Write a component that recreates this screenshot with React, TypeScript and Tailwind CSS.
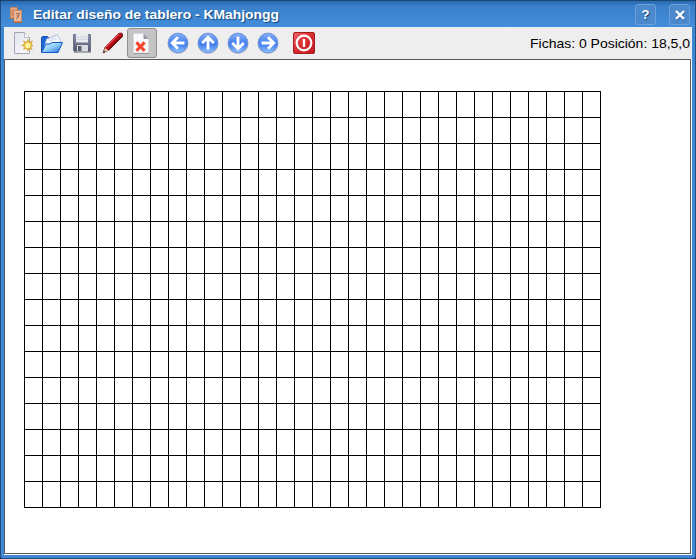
import React from "react";

const COLUMNS = 32;
const ROWS = 16;

function TilesIcon() {
  return (
    <svg width="18" height="20" viewBox="0 0 18 20" className="mt-px">
      <rect x="3" y="2" width="8" height="12" rx="1" fill="#b9693f" />
      <rect x="3.5" y="2.5" width="6.5" height="10.5" rx=".5" fill="#e0a582" />
      <path d="M5 5v6" stroke="#c98058" />
      <rect x="6.5" y="5" width="8.5" height="13" rx="1" fill="#b05f38" />
      <rect x="7" y="5.5" width="7.5" height="11" rx=".5" fill="#e8b794" />
      <path d="M9 8.5h3.5l-3 5.5M9.5 10l2.5 2" stroke="#96563a" strokeWidth=".8" fill="none" />
    </svg>
  );
}

function NewIcon() {
  return (
    <svg width="22" height="24" viewBox="0 0 22 24">
      <defs>
        <linearGradient id="page" x1="0" y1="0" x2="1" y2="1">
          <stop offset="0" stopColor="#dfe3ee" />
          <stop offset="1" stopColor="#ffffff" />
        </linearGradient>
      </defs>
      <path d="M3.5 1.5h10l5 5v16h-15z" fill="url(#page)" stroke="#a3a5b2" />
      <path d="M13.5 1.5v5h5" fill="#fff" stroke="#b4b6c2" />
      <path d="M17 8l1.3 3.2 3.2-1.4-1.3 3.2 1.8 1.4-2 1.3 1.2 3-3-1.2-1.4 3-1.3-3-3.1 1.2 1.3-3-3.2-1.3 3.1-1.4-1.2-3.2 3.1 1.4z" fill="#e8b93c" stroke="#c79322" strokeWidth=".4" />
      <circle cx="16.8" cy="14.4" r="2.6" fill="#fff5a0" />
    </svg>
  );
}

function OpenIcon() {
  return (
    <svg width="24" height="24" viewBox="0 0 24 24">
      <defs>
        <linearGradient id="folder" x1="0" y1="0" x2="1" y2="1">
          <stop offset="0" stopColor="#d9f5ff" />
          <stop offset=".5" stopColor="#8fcdfc" />
          <stop offset="1" stopColor="#1264dc" />
        </linearGradient>
      </defs>
      <path d="M1.5 21V6.5l1-1h5l2 2h8.5v12z" fill="#2068d8" stroke="#1553b8" />
      <path d="M4 17L6.5 8l11-4.5 3 6.5-4 8z" fill="#f4f7ff" stroke="#8ba4ce" strokeWidth=".6" />
      <path d="M8 8.5l9-3.5M9 10l8-2.5" stroke="#d2d9e8" />
      <path d="M1.5 21.5L6 13h4l2-1.5h10.5l-4.5 10z" fill="url(#folder)" stroke="#1458c6" />
    </svg>
  );
}

function SaveIcon() {
  return (
    <svg width="22" height="24" viewBox="0 0 22 24">
      <defs>
        <linearGradient id="disk" x1="0" y1="0" x2="0" y2="1">
          <stop offset="0" stopColor="#8c90ac" />
          <stop offset="1" stopColor="#53586d" />
        </linearGradient>
      </defs>
      <path d="M2.5 3.5h17v17h-16l-1-1z" fill="url(#disk)" stroke="#6d7189" />
      <rect x="5" y="3" width="12" height="8.5" fill="#e8eaf0" />
      <path d="M5 6h12M5 8.5h12" stroke="#d2d5de" />
      <rect x="6" y="14" width="11" height="6.5" fill="#d9dbe1" />
      <rect x="7" y="15" width="3.5" height="5" fill="#555b71" />
      <path d="M3 21.5h17" stroke="#aaa" />
    </svg>
  );
}

function PencilIcon() {
  return (
    <svg width="24" height="24" viewBox="0 0 24 24">
      <path d="M2 22l2-5.5L17.5 2.5l3-.5 1 1v2.5L8 19z" fill="#b90d16" stroke="#620810" strokeWidth=".8" />
      <path d="M5 16L18 3" stroke="#e04a4a" strokeWidth="1.2" />
      <path d="M7.5 18.5L21 5" stroke="#7c0810" strokeWidth="1.3" />
      <path d="M2 22l2-5 3.5 2.5z" fill="#e8c99e" />
      <path d="M2 22l1-2.5 1.5 1.5z" fill="#222" />
    </svg>
  );
}

function DeleteIcon() {
  return (
    <svg width="22" height="24" viewBox="0 0 22 24">
      <path d="M2.5 2.5h10l5 5v14.5h-15z" fill="#fafafd" stroke="#d9d9e0" />
      <path d="M12.5 2.5v5.5h5.5z" fill="#9599a5" />
      <path d="M3 22.5h15" stroke="#999" />
      <path d="M5.3 11.3l8.4 8.6M13.7 11.3l-8.4 8.6" stroke="#fbb3a6" strokeWidth="3.6" />
      <path d="M5.5 11.5l8 8.2M13.5 11.5l-8 8.2" stroke="#f5402a" strokeWidth="2.6" />
    </svg>
  );
}

function ArrowIcon({ angle }: { angle: number }) {
  return (
    <svg width="24" height="24" viewBox="0 0 24 24">
      <defs>
        <linearGradient id="ball" x1="0" y1="0" x2="0" y2="1">
          <stop offset="0" stopColor="#8aaef5" />
          <stop offset=".45" stopColor="#4c86f0" />
          <stop offset=".6" stopColor="#4580ee" />
          <stop offset="1" stopColor="#93c6fd" />
        </linearGradient>
      </defs>
      <ellipse cx="12" cy="13" rx="10.5" ry="10" fill="#aaa" opacity=".5" />
      <circle cx="12" cy="12" r="9.9" fill="url(#ball)" stroke="#6d94dc" />
      <g transform={`rotate(${angle} 12 12)`}>
        <path d="M18.5 12h-12M12 6.2L6.2 12l5.8 5.8" fill="none" stroke="#fff" strokeWidth="2.8" />
      </g>
    </svg>
  );
}

function QuitIcon() {
  return (
    <svg width="24" height="24" viewBox="0 0 24 24">
      <defs>
        <linearGradient id="quit" x1="0" y1="0" x2="1" y2="1">
          <stop offset="0" stopColor="#ef6666" />
          <stop offset=".5" stopColor="#d62b2f" />
          <stop offset="1" stopColor="#c61c22" />
        </linearGradient>
      </defs>
      <rect x="1.5" y="1.5" width="21" height="21" rx="1.5" fill="url(#quit)" stroke="#a51b20" />
      <circle cx="12" cy="12" r="7.3" fill="none" stroke="#fff" strokeWidth="2.2" />
      <path d="M12 8v8" stroke="#fff" strokeWidth="2.4" />
    </svg>
  );
}

function TitleButton({ label, children }: { label: string; children: React.ReactNode }) {
  return (
    <button aria-label={label} className="flex h-[21px] w-[21px] items-center justify-center rounded-[3px] border border-[#6ba0da] bg-[#4b89cc]">
      {children}
    </button>
  );
}

function TitleBar() {
  return (
    <header className="flex h-[27px] shrink-0 items-center border-t border-[#184674] bg-linear-to-b from-[#2869ae] via-[#3a7fc9] via-20% to-[#438edb] pr-[5px] pl-[6px]">
      <TilesIcon />
      <h1 className="ml-[8px] whitespace-nowrap text-white [text-shadow:1px_1px_1px_#174a80]">
        <svg width="248" height="20" className="block overflow-visible">
          <text x="0" y="15" textLength="246" lengthAdjust="spacingAndGlyphs" fill="white" fontSize="13" fontWeight="700">
            Editar diseño de tablero - KMahjongg
          </text>
        </svg>
      </h1>
      <div className="mt-px ml-auto flex gap-[13px]">
        <TitleButton label="Ayuda">
          <span className="text-[13px] leading-none font-bold text-white [text-shadow:1px_1px_1px_#174a80]">?</span>
        </TitleButton>
        <TitleButton label="Cerrar">
          <svg width="12" height="12" viewBox="0 0 12 12">
            <path d="M2.5 3l8 8M10.5 3l-8 8" stroke="#235b96" strokeWidth="2" />
            <path d="M2 2l8 8M10 2l-8 8" stroke="#fff" strokeWidth="2.4" />
          </svg>
        </TitleButton>
      </div>
    </header>
  );
}

function Toolbar() {
  return (
    <div className="flex h-8 shrink-0 items-center bg-[#eeeeee] pl-[7px]">
      <NewIcon />
      <div className="ml-[7px]"><OpenIcon /></div>
      <div className="ml-[7px]"><SaveIcon /></div>
      <div className="ml-[8px]"><PencilIcon /></div>
      <div className="ml-[2px] flex h-[30px] w-[30px] items-center justify-center rounded-[3px] border border-[#8e8e8e] bg-[#c4c4c4]">
        <DeleteIcon />
      </div>
      <div className="ml-[9px] flex gap-[6px]">
        <ArrowIcon angle={0} />
        <ArrowIcon angle={90} />
        <ArrowIcon angle={270} />
        <ArrowIcon angle={180} />
      </div>
      <div className="ml-3"><QuitIcon /></div>
      <svg width="160" height="20" className="mr-[2px] ml-auto block overflow-visible">
        <text x="0" y="15" textLength="160" lengthAdjust="spacingAndGlyphs" fill="black" fontSize="13">
          Fichas: 0 Posición: 18,5,0
        </text>
      </svg>
    </div>
  );
}

function Board() {
  return (
    <main className="h-[495px] w-[687px] border border-[#55585c] bg-white pt-[31px] pl-[19px]">
      <div className="grid w-[577px] grid-cols-[repeat(32,18px)] grid-rows-[repeat(16,26px)] border-t border-l border-black">
        {Array.from({ length: COLUMNS * ROWS }, (_, i) => (
          <div key={i} className="border-r border-b border-black" />
        ))}
      </div>
    </main>
  );
}

export default function App() {
  return (
    <div className="h-[559px] w-[696px] overflow-hidden bg-[#0f2f50] font-['Liberation_Sans',Arial,sans-serif]">
      <div className="flex h-full flex-col rounded-[3px] border-r border-b border-l border-[#1f4f82] bg-[#3f87d3]">
        <TitleBar />
        <div className="mr-[3px] ml-[3px] flex h-[528px] flex-col bg-white">
          <Toolbar />
          <Board />
        </div>
      </div>
    </div>
  );
}
